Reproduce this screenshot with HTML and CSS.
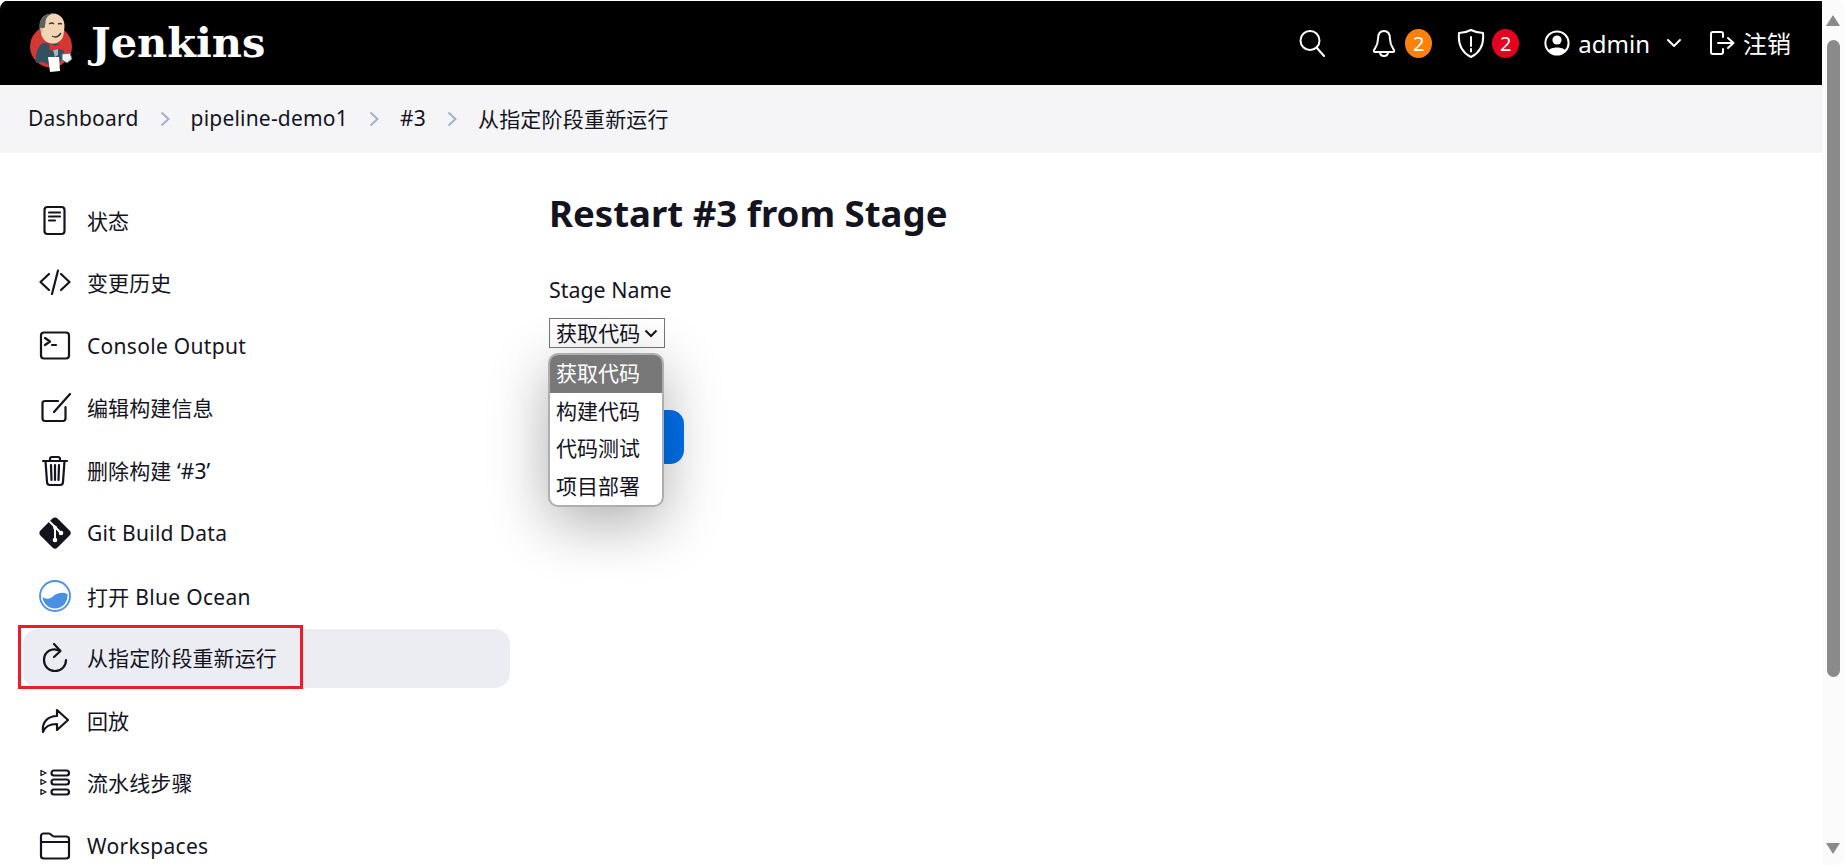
FILE: index.html
```html
<!DOCTYPE html>
<html lang="en">
<head>
    <meta charset="UTF-8">
    <title>Restart #3 from Stage - Jenkins</title>
    <link rel="stylesheet" href="styles.css">
</head>
<body>
<div class="window">
    <div class="page">

        <header class="topbar">
            <a class="brand" href="#">
                <svg class="butler" viewBox="0 0 44 60" width="44" height="60">
                    <circle cx="21" cy="33.500" r="21" fill="#d33833"/>
                    <path d="M6 50 C5 42 7 34 13 30 L31 31 C34 36 35 42 33 46 L28 50 L20 52 L12 49 Z" fill="#335061"/>
                    <path d="M10 12 C10 4 16 0.500 23 0.500 C30 0.500 35 6 34.500 14 L33.500 22 C32 28 27 31 22 30.500 C16 30 12 26 11 20 Z" fill="#f0d6b7"/>
                    <path d="M10.500 21 C7 10 11 1 23 0.500 C18 2 15.500 5 15.500 10 L14.500 15 L11.500 15 Z" fill="#5f5f5f"/>
                    <path d="M10 15 q3 -1 3.500 2 q0 3 -2.500 3 Z" fill="#e9bd9c"/>
                    <path d="M19 11 q3 -2 5 0 M28 11 q2 -1 4 0 M22 23 q5 3 9 -3" fill="none" stroke="#49322a" stroke-width="1.400"/>
                    <path d="M19 30 L25 33 L33 30 L33 37 L26 35.500 L20 38 Z" fill="#e82d2d"/>
                    <path d="M23 37 L28 36 L28 42 L25 44 Z" fill="#a6b6c1"/>
                    <path d="M18 44 L29 44 L30 58 L20 59 Z" fill="#fff"/>
                    <path d="M32 41 L40 40 L42 46 L37 50 L32 47 Z" fill="#f4f0ea" stroke="#49728b" stroke-width="1"/>
                </svg>
                <span class="wordmark">Jenkins</span>
            </a>
            <div class="topbar-actions">
                <svg class="top-icon search-icon" viewBox="0 0 26 28"><circle cx="11" cy="11.500" r="9.500"/><path d="M18 19 L25 27"/></svg>
                <svg class="top-icon bell-icon" viewBox="0 0 24 28"><path d="M12 2 C7.500 2 6 6 6 10 C6 16 4 18 2 21 C1.500 22.300 2 23 3 23 H21 C22 23 22.500 22.300 22 21 C20 18 18 16 18 10 C18 6 16.500 2 12 2 Z"/><path d="M8 23 C8 26 10 27 12 27 C14 27 16 26 16 23"/></svg>
                <span class="badge badge-orange">2</span>
                <svg class="top-icon shield-icon" viewBox="0 0 28 30"><path d="M14 2 C10 4 6 5 2 5 C1 15 4 24 14 29 C24 24 27 15 26 5 C22 5 18 4 14 2 Z"/><path d="M14 9 V18 M14 21 V23.500"/></svg>
                <span class="badge badge-red">2</span>
                <svg class="user-icon" viewBox="0 0 26 26"><circle cx="13" cy="13" r="11.600" fill="none" stroke="#fff" stroke-width="2"/><circle cx="13" cy="10" r="4.600" fill="#fff"/><path d="M4.600 20.500 C6.500 16.500 19.500 16.500 21.400 20.500 C17 25.500 9 25.500 4.600 20.500 Z" fill="#fff"/></svg>
                <span class="user-name">admin</span>
                <svg class="top-icon caret-icon" viewBox="0 0 16 10"><path d="M2 2 L8 8 L14 2"/></svg>
                <svg class="top-icon logout-icon" viewBox="0 0 26 26"><path d="M14 7 V4 C14 2.500 13 2 12 2 H4 C2.500 2 2 3 2 4 V22 C2 23.500 3 24 4 24 H12 C13 24 14 23.500 14 22 V19"/><path d="M9 13 H24 M19 8 L24.500 13 L19 18"/></svg>
                <span class="logout-label">注销</span>
            </div>
        </header>

        <nav class="breadcrumb">
            <a href="#">Dashboard</a>
            <svg class="crumb-sep" viewBox="0 0 10 16"><path d="M1.500 1.500 L8.500 8 L1.500 14.500"/></svg>
            <a href="#">pipeline-demo1</a>
            <svg class="crumb-sep" viewBox="0 0 10 16"><path d="M1.500 1.500 L8.500 8 L1.500 14.500"/></svg>
            <a href="#">#3</a>
            <svg class="crumb-sep" viewBox="0 0 10 16"><path d="M1.500 1.500 L8.500 8 L1.500 14.500"/></svg>
            <a href="#">从指定阶段重新运行</a>
        </nav>

        <div class="content">
            <aside class="sidebar">
                <a class="task" href="#">
                    <svg class="task-icon" viewBox="0 0 32 32"><rect x="5.500" y="2" width="20" height="27" rx="3"/><path d="M10 7.500 H21 M10 11.500 H21 M10 15.500 H16"/></svg>
                    <span class="label-cjk">状态</span>
                </a>
                <a class="task" href="#">
                    <svg class="task-icon" viewBox="0 0 32 32"><path d="M10 7 L1.500 15 L10 23 M22 7 L30.500 15 L22 23 M19 3.500 L13 27"/></svg>
                    <span class="label-cjk">变更历史</span>
                </a>
                <a class="task" href="#">
                    <svg class="task-icon" viewBox="0 0 32 32"><rect x="2" y="2.500" width="28" height="26" rx="3"/><path d="M6 8 L11 11.500 L6 15 M13 15 H17"/></svg>
                    <span>Console Output</span>
                </a>
                <a class="task" href="#">
                    <svg class="task-icon" viewBox="0 0 32 32"><path d="M19 9 H6 C4.500 9 3.500 10 3.500 11 V26 C3.500 28 4.500 29 6 29 H24 C25.500 29 26.500 28 26.500 26 V15"/><path d="M15 20 L31 2"/></svg>
                    <span class="label-cjk">编辑构建信息</span>
                </a>
                <a class="task" href="#">
                    <svg class="task-icon" viewBox="0 0 32 32"><path d="M4 6 H28 M11 6 V4 C11 2.500 12 2 13 2 H19 C20 2 21 2.500 21 4 V6"/><path d="M6.500 6 L8 27 C8 29 9 30 11 30 H21 C23 30 24 29 24 27 L25.500 6"/><path d="M12 10 L12.500 25 M16 10 V25 M20 10 L19.500 25"/></svg>
                    <span class="label-cjk">删除构建 ‘#3’</span>
                </a>
                <a class="task" href="#">
                    <svg class="task-icon git-icon" viewBox="0 0 32 32"><rect x="5" y="5" width="22" height="22" rx="2.500" transform="rotate(45 16 16)"/><path class="git-branch" d="M11 5 L22 16 M16 10 V23 M16 10 L22 16"/><circle class="git-node" cx="16" cy="10.500" r="2"/><circle class="git-node" cx="16" cy="23" r="2.300"/><circle class="git-node" cx="22" cy="16" r="2.300"/></svg>
                    <span>Git Build Data</span>
                </a>
                <a class="task" href="#">
                    <svg class="task-icon ocean-icon" viewBox="0 0 32 32"><circle cx="16" cy="16" r="15"/><path class="ocean-wave" d="M3.500 17 C8 20 11 19 15 15.500 C19 12.500 24 12 28.500 14 C29 23 23 28.500 16 28.500 C9 28.500 4 23 3.500 17 Z"/></svg>
                    <span>打开 Blue Ocean</span>
                </a>
                <a class="task task-active" href="#">
                    <svg class="task-icon" viewBox="0 0 32 32"><path d="M21 9 C13 4.500 5 10 5 18 C5 24.500 10 29 16 29 C22 29 27 24.500 27 18"/><path d="M15 2 L21.500 9 L15 15"/></svg>
                    <span class="label-cjk">从指定阶段重新运行</span>
                    <span class="task-outline"></span>
                </a>
                <a class="task" href="#">
                    <svg class="task-icon" viewBox="0 0 32 32"><path d="M18 5 L29 15 L18 25 V19 C11 19 6 21 4 27 C2.500 17 9 11 18 11 Z"/></svg>
                    <span class="label-cjk">回放</span>
                </a>
                <a class="task" href="#">
                    <svg class="task-icon" viewBox="0 0 32 32"><rect x="12.500" y="3.500" width="17.500" height="5" rx="2.500"/><rect x="12.500" y="12.500" width="17.500" height="5" rx="2.500"/><rect x="12.500" y="22.500" width="17.500" height="5" rx="2.500"/><path class="thin" d="M2 3.500 L7 6 L2 8.500 Z M2 12.500 L7 15 L2 17.500 Z M2 22.500 L7 25 L2 27.500 Z"/></svg>
                    <span class="label-cjk">流水线步骤</span>
                </a>
                <a class="task" href="#">
                    <svg class="task-icon" viewBox="0 0 32 32"><path d="M2 6 C2 4.500 3 3.500 4.500 3.500 H10 C12 3.500 13 6.500 15 6.500 H27 C29 6.500 30 7.500 30 9 V26 C30 27.500 29 28.500 27 28.500 H5 C3 28.500 2 27.500 2 26 Z M2 12 H30"/></svg>
                    <span>Workspaces</span>
                </a>
            </aside>

            <main class="main">
                <h1 class="title">Restart #3 from Stage</h1>
                <label class="field-label">Stage Name</label>
                <div class="select-wrap">
                    <div class="select-box">
                        <span class="label-cjk">获取代码</span>
                        <svg class="select-caret" viewBox="0 0 14 9"><path d="M1.500 1.500 L7 7 L12.500 1.500"/></svg>
                    </div>
                    <!-- open dropdown list, sits over the button -->
                    <ul class="select-list">
                        <li class="selected">获取代码</li>
                        <li>构建代码</li>
                        <li>代码测试</li>
                        <li>项目部署</li>
                    </ul>
                </div>
                <button class="run-button" aria-label="运行"></button>
            </main>
        </div>
    </div>

    <div class="scrollbar">
        <span class="arrow-up"></span>
        <span class="thumb"></span>
        <span class="arrow-down"></span>
    </div>
</div>
</body>
</html>
```

FILE: styles.css
```css
* {
    box-sizing: border-box;
}
html, body {
    height: 100%;
    margin: 0;
    background-color: #fff;
    overflow: hidden;
}
body {
    font-family: "Noto Sans", "Noto Sans CJK SC", sans-serif;
    color: #14141f;
    font-size: 21px;
}
a {
    color: inherit;
    text-decoration: none;
}

.window {
    display: flex;
    height: 865px;
    overflow: hidden;
    border-radius: 9px;
}
.page {
    flex: 1;
    min-width: 0;
    padding-top: 1px;
}

/* top bar */
.topbar {
    display: flex;
    align-items: center;
    justify-content: space-between;
    height: 84px;
    padding: 0 31px 0 30px;
    background-color: #000;
    color: #fff;
}
.brand {
    display: flex;
    align-items: center;
    gap: 17px;
}
.butler {
    display: block;
}
.wordmark {
    font-family: "DejaVu Serif", serif;
    font-weight: bold;
    font-size: 41.500px;
    line-height: 50px;
}
.topbar-actions {
    display: flex;
    align-items: center;
}
.top-icon {
    fill: none;
    stroke: #fff;
    stroke-width: 2;
    stroke-linecap: round;
    stroke-linejoin: round;
}
.search-icon {
    width: 26px;
    height: 28px;
    margin-right: 47px;
}
.bell-icon {
    width: 24px;
    height: 28px;
    margin-right: 9px;
}
.badge {
    display: flex;
    align-items: center;
    justify-content: center;
    width: 27px;
    height: 29px;
    border-radius: 50%;
    font-size: 20px;
    color: #fff;
}
.badge-orange {
    background-color: #fe820a;
    margin-right: 25px;
}
.badge-red {
    background-color: #e6001f;
    margin-right: 25px;
}
.shield-icon {
    width: 28px;
    height: 30px;
    margin-right: 7px;
}
.user-icon {
    width: 26px;
    height: 26px;
    margin-right: 8px;
}
.user-name {
    font-size: 24px;
    margin-right: 16px;
}
.caret-icon {
    width: 16px;
    height: 10px;
    margin-right: 27px;
}
.logout-icon {
    width: 26px;
    height: 26px;
    margin-right: 8px;
}
.logout-label {
    font-size: 24px;
    padding-bottom: 2px;
}

/* breadcrumb */
.breadcrumb {
    display: flex;
    align-items: center;
    height: 68px;
    padding: 0 0 2px 28px;
    background-color: #f5f5f8;
    font-size: 21px;
    letter-spacing: 0.2px;
}
.crumb-sep {
    width: 10px;
    height: 16px;
    margin: 2px 21px 0;
    fill: none;
    stroke: #9fb3cc;
    stroke-width: 2;
}

/* left task list */
.content {
    display: flex;
}
.sidebar {
    width: 487px;
    margin: 38px 0 0 23px;
    flex: none;
    letter-spacing: 0.3px;
}
.task {
    position: relative;
    display: flex;
    align-items: center;
    gap: 16px;
    height: 59.500px;
    margin-bottom: 3px;
    padding-left: 16px;
    border-radius: 15px;
}
/* the CJK fallback sits a bit low in the line box */
.label-cjk {
    padding-bottom: 2px;
    letter-spacing: 0.1px;
}
.task-active {
    background-color: #ecedf3;
}
.task-outline {
    position: absolute;
    left: -5px;
    top: -4px;
    width: 285px;
    height: 64px;
    border: 3px solid #ee1c25;
}
.task-icon {
    width: 32px;
    height: 32px;
    flex: none;
    fill: none;
    stroke: #14141f;
    stroke-width: 2.200;
    stroke-linecap: round;
    stroke-linejoin: round;
}
.task-icon .thin {
    stroke-width: 1.300;
}
.git-icon {
    fill: #14141f;
}
.git-icon .git-branch {
    stroke: #fff;
    stroke-width: 2;
    fill: none;
}
.git-icon .git-node {
    fill: #fff;
    stroke: none;
}
.ocean-icon {
    stroke: #4a90e2;
    stroke-width: 1.800;
}
.ocean-icon .ocean-wave {
    fill: #4a90e2;
    stroke: none;
}

/* main form */
.main {
    position: relative;
    margin-left: 39px;
    padding-top: 31px;
}
.title {
    margin: 0;
    font-size: 36.600px;
    line-height: 58px;
    font-weight: bold;
}
.field-label {
    display: block;
    margin-top: 33px;
    font-size: 21.400px;
    line-height: 30px;
}
.select-wrap {
    position: relative;
    width: 116px;
    margin-top: 13px;
}
.select-box {
    display: flex;
    align-items: center;
    justify-content: space-between;
    height: 30px;
    padding: 0 6px;
    background-color: #fff;
    border: 1px solid #767676;
    font-size: 21px;
}
.select-caret {
    width: 14px;
    height: 9px;
    fill: none;
    stroke: #14141f;
    stroke-width: 2;
}
.select-list {
    position: absolute;
    left: -1px;
    top: 35px;
    width: 116px;
    margin: 0;
    padding: 0;
    list-style: none;
    background-color: #fff;
    border: 2px solid #aeaeae;
    border-radius: 10px;
    overflow: hidden;
    box-shadow: 0 16px 60px rgba(0, 0, 0, 0.32);
    font-size: 21px;
}
.select-list li {
    height: 37.500px;
    line-height: 36px;
    padding-left: 6px;
}
.select-list .selected {
    background-color: #787878;
    color: #fff;
}
/* brighter than it ends up, the list's shadow falls on it */
.run-button {
    display: block;
    width: 135px;
    height: 54px;
    margin-top: 62px;
    border: 0;
    border-radius: 14px;
    background-color: #0072ee;
}

/* scrollbar drawn by hand, the page itself does not scroll */
.scrollbar {
    position: relative;
    width: 23px;
    flex: none;
    background-color: #fbfbfb;
}
.thumb {
    position: absolute;
    left: 5px;
    top: 40px;
    width: 13px;
    height: 637px;
    background-color: #8a8a8a;
    border-radius: 7px;
}
.arrow-up, .arrow-down {
    position: absolute;
    left: 4px;
    width: 0;
    height: 0;
    border-left: 7.500px solid transparent;
    border-right: 7.500px solid transparent;
}
.arrow-up {
    top: 15px;
    border-bottom: 11px solid #8a8a8a;
}
.arrow-down {
    bottom: 11px;
    border-top: 11px solid #8a8a8a;
}
```
